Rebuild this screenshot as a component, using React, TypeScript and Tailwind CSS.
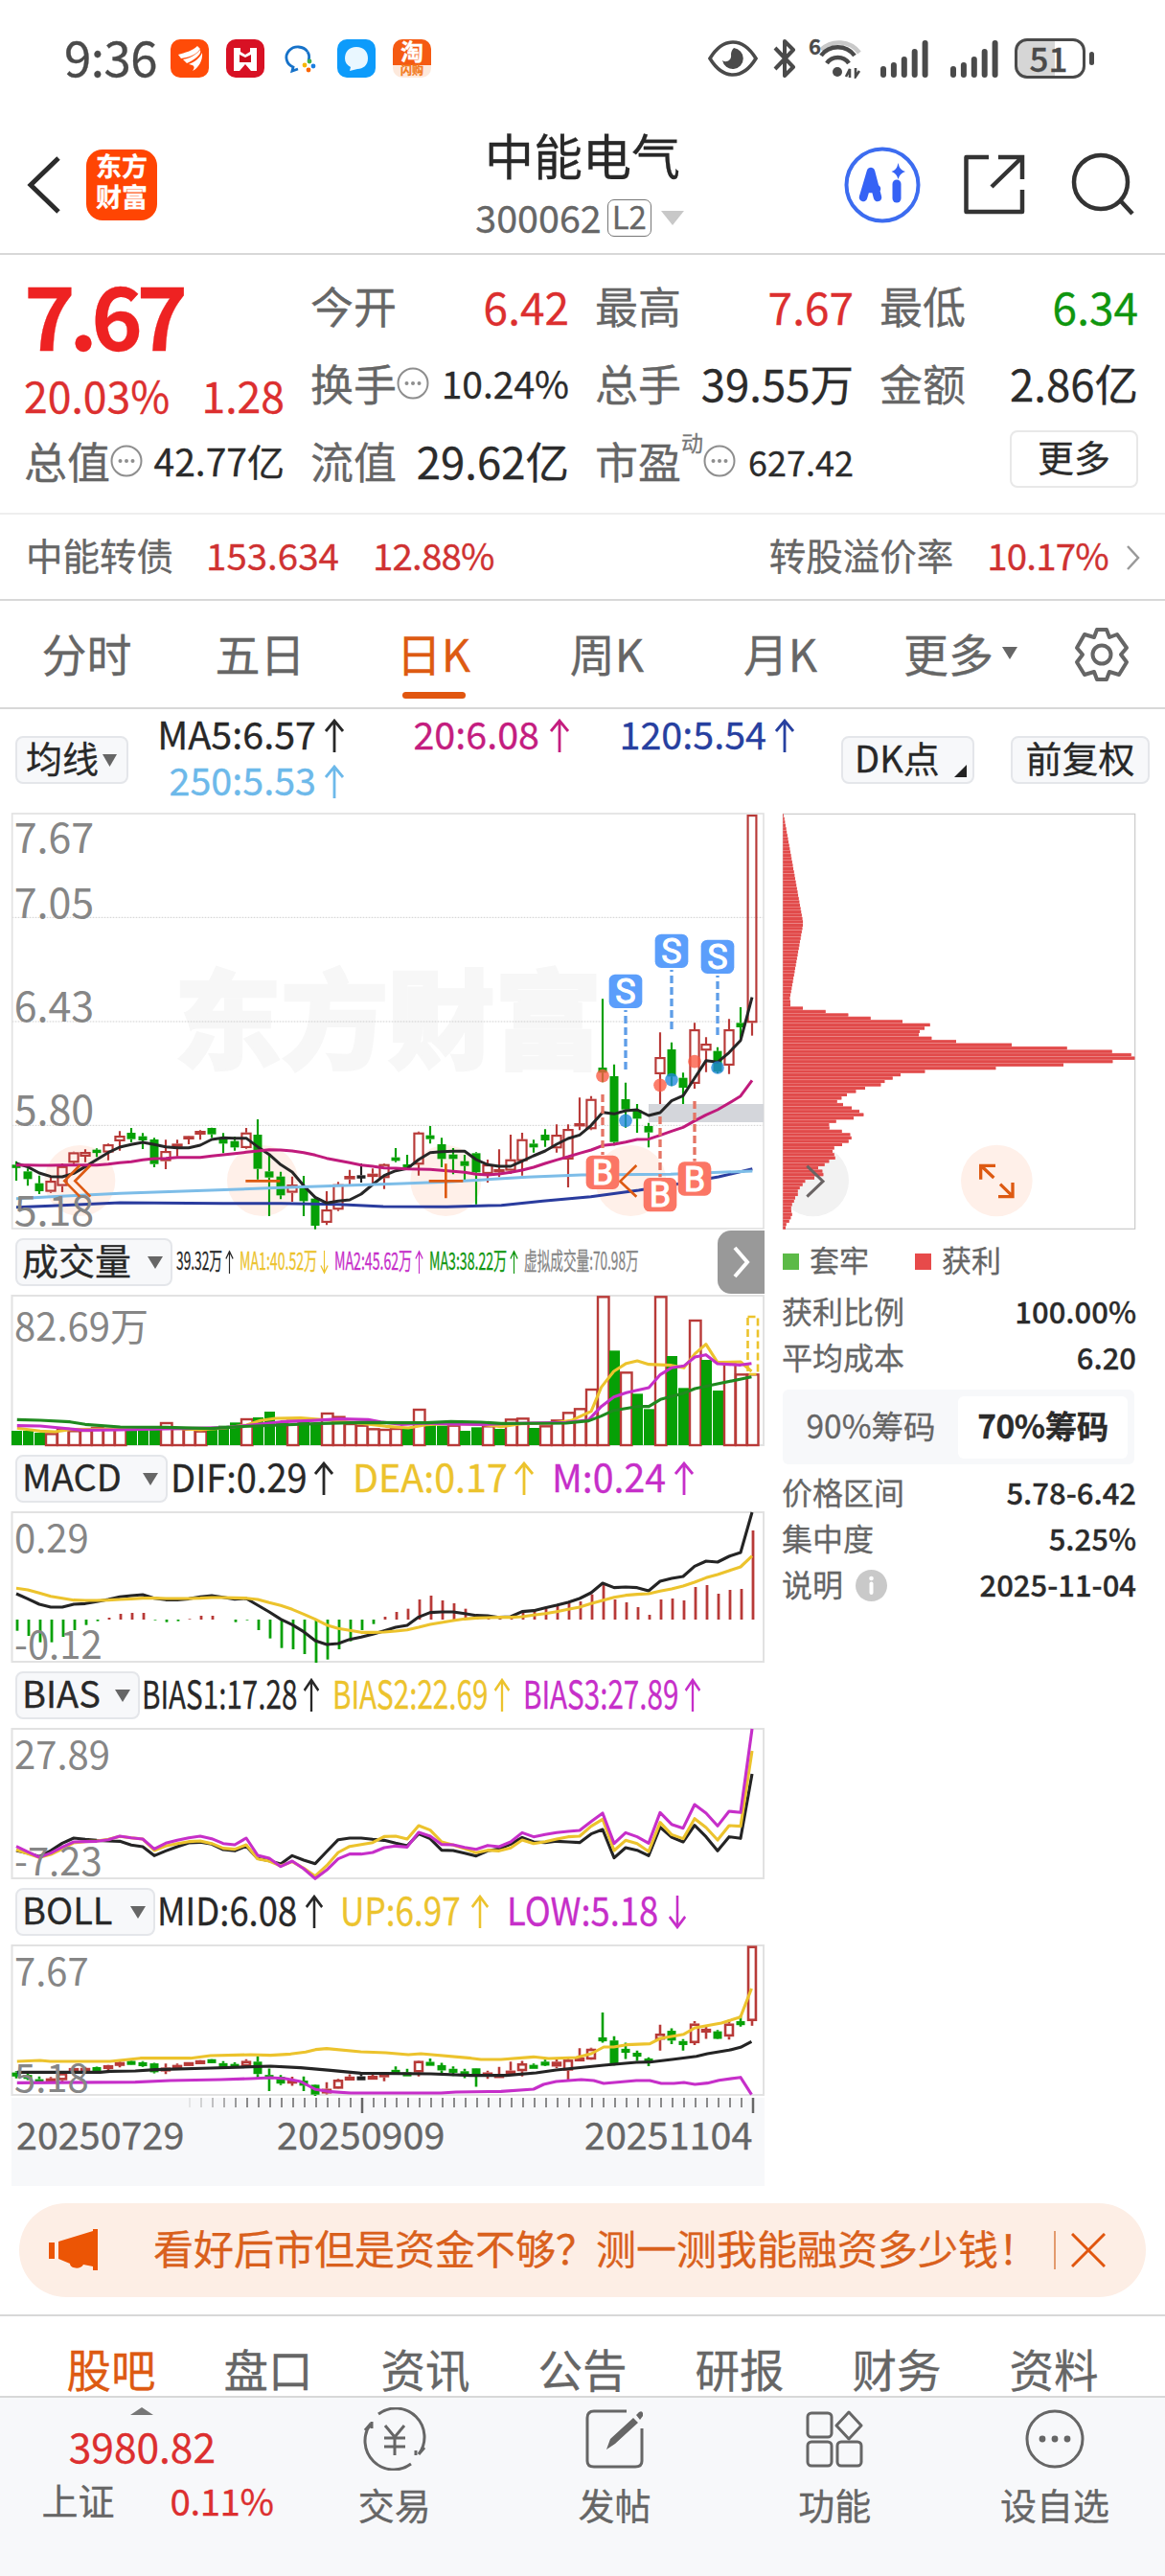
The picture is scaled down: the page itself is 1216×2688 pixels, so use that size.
import { type ReactNode } from 'react'

type Candle = [color: 'r' | 'g' | 'k', high: number, top: number, bottom: number, low: number]

const RED = '#b83a38'
const GREEN = '#06a006'
const YELLOW = '#ecc32d'
const PURPLE = '#c62fc9'
const DARK = '#242424'

// All series are stored in chart units: three units make one pixel.
const candles: Candle[] = [
  ['g', 1115, 1126, 1134, 1176], ['g', 1138, 1147, 1171, 1192], ['g', 1160, 1184, 1209, 1218],
  ['r', 1165, 1176, 1211, 1214], ['r', 1122, 1130, 1193, 1212], ['r', 1085, 1087, 1120, 1130],
  ['r', 1078, 1086, 1101, 1118], ['g', 1075, 1079, 1083, 1102], ['r', 1060, 1062, 1088, 1112],
  ['r', 1021, 1035, 1053, 1082], ['g', 1011, 1026, 1046, 1056], ['g', 1027, 1037, 1050, 1077],
  ['g', 1042, 1047, 1124, 1134], ['r', 1048, 1083, 1115, 1140], ['r', 1048, 1060, 1068, 1100],
  ['r', 1035, 1036, 1047, 1062], ['r', 1018, 1020, 1032, 1048], ['g', 1010, 1011, 1031, 1042],
  ['g', 1027, 1045, 1060, 1090], ['g', 1038, 1052, 1072, 1082], ['r', 1011, 1025, 1074, 1076],
  ['g', 984, 1032, 1139, 1172], ['g', 1092, 1147, 1166, 1287], ['g', 1148, 1163, 1222, 1234],
  ['r', 1163, 1188, 1214, 1242], ['g', 1161, 1196, 1240, 1287], ['g', 1228, 1232, 1317, 1328],
  ['r', 1209, 1266, 1308, 1315], ['r', 1180, 1187, 1267, 1271], ['r', 1142, 1161, 1172, 1190],
  ['k', 1122, 1159, 1164, 1182], ['r', 1138, 1154, 1159, 1185], ['r', 1122, 1124, 1168, 1202],
  ['g', 1074, 1103, 1114, 1118], ['g', 1095, 1125, 1130, 1140], ['r', 1022, 1025, 1126, 1160],
  ['g', 1005, 1034, 1046, 1060], ['g', 1042, 1062, 1108, 1134], ['g', 1074, 1094, 1108, 1156],
  ['g', 1095, 1115, 1130, 1175], ['g', 1087, 1090, 1150, 1250], ['r', 1110, 1125, 1155, 1182],
  ['r', 1078, 1140, 1150, 1165], ['r', 1032, 1109, 1145, 1155], ['r', 1026, 1046, 1115, 1160],
  ['g', 1048, 1060, 1072, 1088], ['g', 1015, 1032, 1050, 1070], ['r', 1000, 1032, 1075, 1088],
  ['r', 1000, 1014, 1110, 1197], ['r', 916, 996, 1006, 1018], ['r', 911, 920, 1015, 1018],
  ['g', 607, 822, 838, 868], ['g', 812, 849, 1055, 1066], ['g', 869, 921, 953, 1010],
  ['g', 936, 955, 982, 1026], ['g', 995, 1005, 1025, 1072], ['r', 712, 789, 843, 936],
  ['g', 743, 765, 850, 880], ['g', 838, 854, 885, 936], ['r', 682, 702, 873, 888],
  ['r', 727, 747, 769, 836], ['g', 758, 770, 835, 840], ['r', 670, 702, 816, 842],
  ['g', 633, 682, 696, 730], ['r', 30, 30, 682, 722],
]

const ma5 = [
  1122, 1133, 1152, 1163, 1164, 1153, 1132, 1110, 1088, 1071, 1063, 1056, 1063, 1070, 1073, 1073, 1065, 1047, 1042, 1043,
  1043, 1070, 1094, 1126, 1149, 1192, 1228, 1246, 1240, 1236, 1218, 1188, 1160, 1145, 1138, 1110, 1088, 1085, 1084, 1084,
  1110, 1126, 1131, 1131, 1115, 1098, 1083, 1062, 1044, 1033, 1003, 962, 967, 957, 954, 972, 963, 926, 910, 855,
  800, 805, 775, 737, 602,
]
const ma20 = [
  1127, 1127, 1128, 1128, 1127, 1127, 1127, 1127, 1124, 1120, 1117, 1111, 1107, 1106, 1103, 1103, 1103, 1099, 1095, 1091,
  1087, 1083, 1079, 1080, 1083, 1088, 1096, 1106, 1113, 1120, 1127, 1131, 1136, 1137, 1139, 1140, 1141, 1144, 1147, 1150,
  1156, 1158, 1155, 1150, 1143, 1134, 1122, 1111, 1101, 1090, 1080, 1066, 1062, 1055, 1047, 1046, 1034, 1021, 1009, 989,
  970, 954, 933, 911, 862,
]
const ma120 = '51,1259 160,1255 376,1245 700,1247 880,1247 1060,1250 1200,1257 1400,1258 1570,1253 1700,1240 1850,1226 2000,1206 2100,1190 2250,1164 2356,1139'
const ma250 = '51,1232 160,1226 376,1216 660,1206 880,1198 1260,1185 1400,1180 1650,1165 1820,1158 2100,1156 2356,1146'

const volumes =
  'g606 g606 g612 r616 r600 r607 r606 r597 r600 r600 g604 g604 g602 r582 r600 r602 r608 g598 g590 g580 r570 g564 g546 g577 r575 g574 g582 r552 r563 r585 r590 r601 r603 r600 g598 r540 g586 g590 r590 g606 g595 r592 g600 r571 r568 g597 r592 r574 r550 r538 r477 r187 g355 r424 g490 g538 r187 g372 g472 r261 g384 g480 r395 r430 r430'.split(' ')

const volMa1: number[][] = [[34, 598], [80, 607], [110, 609], [140, 602], [250, 600], [340, 597], [400, 603], [450, 597], [492, 588], [520, 574], [550, 567], [600, 566], [660, 573], [720, 583], [770, 592], [815, 597], [850, 587], [900, 583], [960, 586], [1000, 593], [1040, 584], [1100, 582], [1140, 574], [1180, 545], [1200, 470], [1225, 420], [1250, 395], [1272, 387], [1295, 398], [1340, 401], [1365, 409], [1387, 365], [1409, 335], [1432, 392], [1478, 390], [1500, 420]]
const volMa2: number[][] = [[34, 590], [80, 591], [120, 597], [165, 604], [240, 603], [330, 600], [450, 596], [500, 588], [560, 578], [620, 574], [680, 569], [735, 571], [760, 578], [800, 586], [850, 582], [900, 585], [960, 586], [1050, 582], [1130, 580], [1175, 572], [1200, 530], [1225, 500], [1250, 487], [1295, 471], [1318, 430], [1340, 409], [1365, 403], [1387, 375], [1409, 368], [1432, 396], [1478, 400], [1500, 395]]
const volMa3: number[][] = [[34, 571], [80, 573], [140, 578], [170, 586], [240, 594], [330, 595], [420, 599], [480, 593], [560, 588], [640, 583], [720, 580], [850, 581], [900, 577], [960, 579], [1000, 583], [1130, 582], [1175, 575], [1200, 560], [1225, 542], [1272, 530], [1295, 530], [1318, 508], [1365, 488], [1387, 474], [1432, 459], [1500, 437]]

const macdBars = [
  392, 408, 428, 428, 411, 390, 374, 362, 351, 339, 336, 336, 359, 365, 362, 355, 345, 345, 357, 365,
  359, 390, 416, 446, 450, 465, 492, 482, 450, 425, 390, 371, 348, 333, 323, 294, 282, 297, 306, 323,
  340, 345, 350, 350, 330, 330, 322, 312, 305, 300, 278, 243, 294, 303, 318, 342, 294, 291, 297, 255,
  249, 276, 264, 261, 78,
]
const dif = [
  276, 292, 309, 318, 318, 309, 307, 301, 294, 286, 282, 279, 290, 295, 295, 292, 286, 282, 287, 293,
  291, 312, 333, 356, 373, 395, 423, 435, 432, 419, 412, 403, 392, 381, 375, 349, 335, 333, 333, 338,
  344, 345, 350, 348, 332, 329, 320, 312, 303, 291, 273, 243, 257, 255, 257, 267, 237, 228, 222, 190,
  174, 177, 159, 147, 21,
]
const dea = [
  259, 264, 274, 284, 290, 296, 297, 297, 296, 294, 292, 290, 290, 291, 291, 291, 290, 288, 288, 289,
  290, 294, 304, 313, 325, 340, 356, 374, 385, 391, 397, 397, 396, 393, 389, 381, 372, 366, 360, 355,
  352, 351, 350, 350, 348, 343, 338, 332, 325, 318, 307, 297, 287, 281, 278, 276, 268, 261, 252, 240,
  226, 216, 204, 192, 158,
]

const bias1 = [
  390, 398, 409, 390, 367, 351, 355, 358, 360, 361, 373, 378, 406, 391, 378, 366, 364, 370, 387, 391,
  376, 415, 422, 432, 406, 420, 431, 393, 356, 351, 351, 355, 358, 367, 375, 338, 353, 389, 390, 398,
  407, 391, 385, 370, 349, 363, 365, 361, 363, 365, 338, 324, 413, 381, 389, 406, 317, 348, 363, 311,
  347, 391, 347, 352, 150,
]
const bias2 = [
  388, 400, 412, 402, 385, 366, 362, 360, 355, 346, 350, 354, 390, 376, 368, 362, 360, 368, 383, 386,
  372, 416, 423, 438, 425, 445, 470, 437, 396, 377, 371, 365, 346, 345, 354, 312, 326, 363, 373, 384,
  397, 389, 391, 382, 357, 368, 362, 354, 347, 345, 314, 292, 390, 358, 368, 393, 302, 340, 353, 290,
  318, 357, 312, 314, 78,
]
const bias3 = [
  377, 394, 411, 398, 379, 363, 362, 361, 356, 345, 350, 354, 385, 367, 358, 350, 345, 353, 368, 372,
  351, 405, 414, 440, 423, 447, 478, 451, 416, 401, 401, 396, 381, 376, 379, 333, 345, 371, 372, 380,
  386, 374, 378, 363, 334, 347, 340, 334, 330, 327, 299, 273, 368, 334, 347, 367, 271, 308, 320, 246,
  273, 313, 267, 271, 9,
]

const bollUp: number[][] = [[34, 390], [80, 387], [100, 390], [220, 390], [280, 380], [380, 380], [420, 372], [500, 369], [540, 371], [580, 367], [610, 361], [630, 353], [652, 350], [720, 360], [770, 363], [815, 369], [840, 366], [940, 380], [960, 384], [1000, 384], [1065, 376], [1095, 381], [1150, 378], [1180, 366], [1205, 345], [1225, 345], [1250, 338], [1297, 335], [1318, 318], [1365, 305], [1387, 285], [1440, 270], [1478, 251], [1500, 162]]
const bollMid: number[][] = [[34, 424], [200, 424], [220, 421], [270, 420], [310, 416], [420, 411], [540, 405], [600, 410], [660, 418], [720, 427], [860, 429], [940, 434], [1010, 434], [1070, 426], [1110, 417], [1205, 402], [1270, 393], [1297, 392], [1345, 383], [1390, 374], [1412, 366], [1455, 355], [1478, 346], [1500, 328]]
const bollLow: number[][] = [[34, 457], [270, 455], [340, 450], [440, 447], [500, 444], [540, 441], [570, 444], [600, 453], [630, 478], [660, 485], [700, 489], [880, 489], [910, 486], [1000, 484], [1065, 477], [1085, 462], [1110, 453], [1160, 447], [1185, 450], [1205, 459], [1270, 450], [1297, 450], [1320, 459], [1345, 459], [1365, 456], [1387, 462], [1412, 458], [1435, 449], [1478, 440], [1500, 494]]

const chipTail = [
  114, 185, 256, 326, 426, 512, 495, 480, 477, 517, 594, 768, 941, 1082, 1142, 1153, 1084, 930, 718, 496, 420, 395, 370,
  358, 309, 280, 252, 235, 221, 240, 267, 291, 304, 273, 218, 196, 197, 236, 262, 266, 257, 237, 212, 207, 212, 215,
  196, 182, 162, 175, 178, 150, 121, 113, 104, 98, 98, 90, 86, 80, 77, 78, 80, 76, 71, 62, 60,
]

const CHIP_STEP = 10.41
const chipBars = Array.from({ length: 125 }, (_, i) => {
  const y = 27 + i * CHIP_STEP
  if (i >= 58) return chipTail[i - 58] ?? 60
  if (y < 365) return 54 + ((y - 27) / 338) * 61
  if (y < 600) return 115 - ((y - 365) / 235) * 42
  return 75
})

// Pixel x of the i-th trading day
const dayX = (i: number) => 17 + 12 * i
const series = (values: number[]) => values.map((v, i) => `${dayX(i)},${v / 3}`).join(' ')
const points = (list: number[][]) => list.map(([x, y]) => `${x / 1.9122},${y / 3}`).join(' ')

function Triangle({ className = '' }: { className?: string }) {
  return (
    <svg className={`shrink-0 ${className}`} viewBox="0 0 10 10" preserveAspectRatio="none">
      <path d="M0 0H10L5 10Z" fill="currentColor" />
    </svg>
  )
}

function Arrow({ down, className = 'w-[22px]' }: { down?: boolean; className?: string }) {
  return (
    <svg className={`h-[36px] shrink-0 ${className} ${down ? 'rotate-180' : ''}`} viewBox="0 0 22 36" preserveAspectRatio="none">
      <path d="M11 35V2M2 13L11 2L20 13" fill="none" stroke="currentColor" strokeWidth="2.8" />
    </svg>
  )
}

function MoreDots() {
  return (
    <svg className="w-[34px] h-[34px] shrink-0 text-[#8e8e8e]" viewBox="0 0 34 34">
      <circle cx="17" cy="17" r="15.5" fill="none" stroke="currentColor" strokeWidth="2" />
      <circle cx="10.5" cy="17" r="2" fill="currentColor" />
      <circle cx="17" cy="17" r="2" fill="currentColor" />
      <circle cx="23.5" cy="17" r="2" fill="currentColor" />
    </svg>
  )
}

function SignalBars() {
  return (
    <svg className="w-[50px] h-[40px]" viewBox="0 0 50 40">
      {[12, 16, 22, 30, 39].map((h, i) => (
        <rect key={i} x={i * 10.9} y={40 - h} width="6" height={h} rx="3" fill="#4a4a4a" />
      ))}
    </svg>
  )
}

function StatusBar() {
  return (
    <div className="h-[122px] flex items-center pl-[67px] pr-[74px] text-[#4a4a4a]">
      <span className="w-[111px] text-[51px] tracking-[-0.5px] -mt-[5px]">9:36</span>
      <div className="flex items-center gap-[18px]">
        <svg className="w-[40px] h-[40px]" viewBox="0 0 40 40">
          <rect width="40" height="40" rx="10" fill="#ff4b08" />
          <path d="M8 16C15 14 23 12 28 7L31 10C26 17 18 19 11 20ZM13 21C20 20 27 16 31 11C33 16 24 22 17 25ZM19 26C25 24 31 19 33 14C34 22 29 30 23 33C26 29 25 27 19 26Z" fill="#fff" />
        </svg>
        <svg className="w-[40px] h-[40px]" viewBox="0 0 40 40">
          <rect width="40" height="40" rx="10" fill="#d81124" />
          <path d="M8 9L15 9V13L20 16L25 13V9L32 9V33H26L20 26L14 33H8Z" fill="#fff" />
          <path d="M14 16L20 19L26 16V24H14Z" fill="#c90a1d" />
        </svg>
        <svg className="w-[40px] h-[40px]" viewBox="0 0 40 40">
          <path d="M27 13A12 11 0 1 0 12 29L11 33L17 31" fill="none" stroke="#1672c9" strokeWidth="2.8" />
          <path d="M27 13A12 11 0 0 1 28 22" fill="none" stroke="#1672c9" strokeWidth="2.8" />
          <circle cx="29" cy="23" r="2.4" fill="#3fae49" />
          <circle cx="33" cy="28" r="2.4" fill="#1b7fe0" />
          <circle cx="28" cy="32" r="2.4" fill="#fb6500" />
          <circle cx="24" cy="27" r="2.4" fill="#f7b500" />
        </svg>
        <svg className="w-[40px] h-[40px]" viewBox="0 0 40 40">
          <rect width="40" height="40" rx="10" fill="#0d9bfb" />
          <path d="M20 8C28 8 32 13 32 20C32 27 27 31 21 31L13 33L14 29C10 27 8 24 8 20C8 13 12 8 20 8Z" fill="#e9f7ff" />
        </svg>
        <div className="w-[40px] h-[40px] rounded-[10px] bg-[#fde9dc] flex flex-col items-center">
          <div className="w-full h-[27px] rounded-t-[10px] bg-[#f55a12] text-white text-[24px] leading-[23px] font-bold text-center">淘</div>
          <div className="text-[12px] font-bold text-[#f27a1c] whitespace-nowrap -mt-[1px]">闪购</div>
        </div>
      </div>
      <div className="ml-auto flex items-center">
        <svg className="w-[52px] h-[38px]" viewBox="0 0 52 38">
          <path d="M2 19C10 6 18 2 26 2S42 6 50 19C42 32 34 36 26 36S10 32 2 19Z" fill="none" stroke="#4a4a4a" strokeWidth="3.6" />
          <path d="M27 8A11 11 0 1 1 15 21C19 24 25 21 24 15C24 12 25 10 27 8Z" fill="#4a4a4a" />
        </svg>
        <svg className="w-[24px] h-[40px] ml-[16px]" viewBox="0 0 24 40">
          <path d="M2 9L21 29L12 38V2L21 11L2 31" fill="none" stroke="#4a4a4a" strokeWidth="4" strokeLinejoin="round" />
        </svg>
        <div className="relative w-[56px] h-[42px] ml-[13px]">
          <span className="absolute left-0 -top-[4px] text-[22px] font-bold">6</span>
          <svg className="w-[56px] h-[42px]" viewBox="0 0 56 42" fill="none" strokeWidth="4.5">
            <path d="M13 12A27 27 0 0 1 53 15" stroke="#c9c9c9" />
            <path d="M13 18A22 22 0 0 1 48 18" stroke="#4a4a4a" />
            <path d="M19 26A14 14 0 0 1 42 26" stroke="#4a4a4a" />
            <circle cx="30" cy="35" r="5" fill="#4a4a4a" />
            <path d="M39 40L43 32V41M49 31V40L53 34" stroke="#4a4a4a" strokeWidth="2.6" />
          </svg>
        </div>
        <div className="ml-[19px] flex gap-[23px]">
          <SignalBars />
          <SignalBars />
        </div>
        <div className="ml-[17px] w-[74px] h-[42px] rounded-[13px] border-[3px] border-[#4a4a4a] bg-[linear-gradient(90deg,#d6d6d6_58%,#fff_58%)] flex items-center justify-center text-[35px] font-medium pb-[4px] pr-[3px]">
          51
        </div>
        <div className="ml-[4px] w-[5px] h-[14px] rounded bg-[#4a4a4a]" />
      </div>
    </div>
  )
}

function TitleBar() {
  return (
    <header className="h-[144px] border-b-2 border-[#d8d8d8] flex text-[#282828]">
      <div className="w-[400px] flex pt-[34px]">
        <svg className="w-[36px] h-[60px] ml-[28px] mt-[7px]" viewBox="0 0 36 60">
          <path d="M33 2L4 30L33 58" fill="none" stroke="#2b2b2b" strokeWidth="5" />
        </svg>
        <div className="ml-[26px] w-[74px] h-[74px] rounded-[17px] bg-[#ff4503] text-white font-bold text-[27px] leading-[32px] text-center pt-[1px]">
          东方
          <br />
          财富
        </div>
      </div>
      <div className="w-[416px] flex flex-col items-center">
        <h1 className="text-[51px] mt-[14px]">中能电气</h1>
        <div className="flex items-center mt-[21px] mr-[6px] text-[39.5px] text-[#666]">
          <span className="-mt-[4px]">300062</span>
          <span className="ml-[6px] w-[46px] h-[39px] border-[1.5px] border-[#777] rounded-[7px] text-[33px] text-center">L2</span>
          <Triangle className="ml-[10px] w-[24px] h-[15px] text-[#c8c8c8]" />
        </div>
      </div>
      <div className="flex-1 flex items-start">
        <svg className="w-[80px] h-[80px] ml-[65px] mt-[31px]" viewBox="0 0 80 80">
          <circle cx="40" cy="40" r="37.5" fill="none" stroke="#3c6cf0" strokeWidth="4" />
          <path d="M20 53L28 26L35 53M23 44H34" fill="none" stroke="#3562f5" strokeWidth="8.5" strokeLinejoin="round" strokeLinecap="round" />
          <path d="M55 39V54" stroke="#3562f5" strokeWidth="9" strokeLinecap="round" />
          <path d="M56.5 17Q58 25 64 26Q58 28 56.5 34Q55 28 49.5 26Q55 25 56.5 17Z" fill="#3562f5" />
        </svg>
        <svg className="w-[66px] h-[66px] ml-[44px] mt-[38px]" viewBox="0 0 66 66" fill="none" stroke="#333" strokeWidth="4.5">
          <path d="M27 4H3.5V61H62V38" strokeLinejoin="round" />
          <path d="M37 4H62V27M62 4L30 35" />
        </svg>
        <svg className="w-[68px] h-[68px] ml-[47px] mt-[37px]" viewBox="0 0 68 68" fill="none" stroke="#333" strokeWidth="4.5">
          <circle cx="31" cy="31" r="28" />
          <path d="M51 50L64 64" />
        </svg>
      </div>
    </header>
  )
}

function Quote({ label, value, size = 'text-[45px]', color = 'text-[#2b2b2b]', icon }: { label: string; value: string; size?: string; color?: string; icon?: ReactNode }) {
  return (
    <div className="h-[81px] flex items-center whitespace-nowrap">
      <span className="text-[45px] text-[#666]">{label}</span>
      {icon}
      <span className={`ml-auto ${size} ${color}`}>{value}</span>
    </div>
  )
}

function QuotePanel() {
  return (
    <section className="h-[271px] border-b-2 border-[#eee] pt-[12px] px-[25px] grid grid-cols-[272px_270px_270px_270px] gap-x-[27px]">
      <div className="flex flex-col">
        <div className="h-[107px] flex items-center text-[91px] font-bold tracking-[-6.5px] text-[#ee2222] pb-[10px]">7.67</div>
        <div className="h-[55px] flex items-center justify-between text-[44.5px] text-[#dc2f2f]">
          <span>20.03%</span>
          <span>1.28</span>
        </div>
        <Quote label="总值" value="42.77亿" size="text-[39px]" icon={<MoreDots />} />
      </div>
      <div>
        <Quote label="今开" value="6.42" size="text-[46px]" color="text-[#dc2f2f]" />
        <Quote label="换手" value="10.24%" size="text-[39px]" icon={<MoreDots />} />
        <Quote label="流值" value="29.62亿" size="text-[45.5px]" />
      </div>
      <div>
        <Quote label="最高" value="7.67" size="text-[46px]" color="text-[#dc2f2f]" />
        <Quote label="总手" value="39.55万" size="text-[45.5px]" />
        <Quote
          label="市盈"
          value="627.42"
          size="text-[36px]"
          icon={
            <span className="flex items-center">
              <span className="text-[23px] text-[#777] self-start -mt-[14px]">动</span>
              <MoreDots />
            </span>
          }
        />
      </div>
      <div>
        <Quote label="最低" value="6.34" size="text-[46px]" color="text-[#0f960f]" />
        <Quote label="金额" value="2.86亿" size="text-[45.5px]" />
        <div className="h-[77px] flex items-center justify-end">
          <button className="w-[134px] h-[60px] border-2 border-[#e8e8e8] rounded-[8px] text-[38px] text-[#2b2b2b] pb-[5px]">更多</button>
        </div>
      </div>
    </section>
  )
}

function BondRow() {
  return (
    <div className="h-[90px] border-b-2 border-[#d8d8d8] flex items-center pl-[27px] pr-[26px] pb-[6px] text-[38.5px] text-[#666] whitespace-nowrap">
      <span>中能转债</span>
      <span className="ml-[34px] text-[#cf3232]">153.634</span>
      <span className="ml-[35px] text-[#cf3232] tracking-[-0.8px]">12.88%</span>
      <span className="ml-auto">转股溢价率</span>
      <span className="ml-[35px] text-[#cf3232] tracking-[-0.8px]">10.17%</span>
      <svg className="w-[14px] h-[28px] ml-[19px] mt-[8px]" viewBox="0 0 14 28">
        <path d="M1 2L12 14L1 26" fill="none" stroke="#999" strokeWidth="2.5" />
      </svg>
    </div>
  )
}

function PeriodTabs() {
  const tabs = ['分时', '五日', '日K', '周K', '月K', '更多']
  return (
    <nav className="h-[113px] border-b-2 border-[#d8d8d8] grid grid-cols-[181px_181px_181px_181px_181px_181px_128px] text-[47px] text-[#666]">
      {tabs.map((tab) => (
        <div key={tab} className={`flex flex-col items-center ${tab === '日K' ? 'text-[#dd5a12]' : ''}`}>
          <span className="mt-[30px] flex items-center whitespace-nowrap">
            {tab}
            {tab === '更多' && <Triangle className="ml-[9px] -mr-[14px] mt-[2px] w-[16px] h-[13px]" />}
          </span>
          {tab === '日K' && <span className="mt-[18px] w-[66px] h-[7px] rounded bg-[#e1560f]" />}
        </div>
      ))}
      <div className="flex justify-center pt-[27px]">
        <svg className="w-[58px] h-[58px]" viewBox="0 0 58 58" fill="none" stroke="#666" strokeWidth="4" strokeLinejoin="round">
          <path d="M24 3H34L37 11L45 8L55 22L49 29L55 37L47 50L37 47L34 55H24L21 47L11 50L3 37L9 29L3 22L11 8L21 11Z" />
          <circle cx="29" cy="29" r="9.5" />
        </svg>
      </div>
    </nav>
  )
}

function Chip({ children, className = '' }: { children: ReactNode; className?: string }) {
  return (
    <div className={`h-[50px] shrink-0 flex items-center whitespace-nowrap rounded-[8px] border-2 border-[#e4e6ea] bg-[#f7f8fa] text-[38px] text-[#282828] ${className}`}>
      {children}
    </div>
  )
}

function AverageRow() {
  return (
    <div className="h-[108px] flex pl-[16px] pr-[16px]">
      <Chip className="mt-[28px] w-[118px] pl-[9px]">
        <span className="-mt-[6px]">均线</span>
        <Triangle className="ml-[4px] w-[15px] h-[13px] text-[#666]" />
      </Chip>
      <div className="w-[696px] grid grid-cols-[226px_235px_235px] content-start pt-[10px] gap-y-[12px] text-[39.5px]">
        <span className="flex items-center justify-end text-[#282828]"><span className="mr-[8px] -mt-[6px]">MA5:6.57</span><Arrow /></span>
        <span className="flex items-center justify-end text-[#c41d7f]"><span className="mr-[10px] -mt-[6px]">20:6.08</span><Arrow /></span>
        <span className="flex items-center justify-end text-[#2740a0]"><span className="mr-[8px] -mt-[6px]">120:5.54</span><Arrow /></span>
        <span className="flex items-center justify-end text-[#6db9ea]"><span className="mr-[8px] -mt-[6px]">250:5.53</span><Arrow /></span>
      </div>
      <Chip className="mt-[28px] ml-auto w-[139px] pl-[12px]">
        <span className="-mt-[6px]">DK点</span>
        <svg className="w-[13px] h-[13px] ml-auto mr-[6px] mt-[22px]" viewBox="0 0 13 13"><path d="M13 0V13H0Z" fill="#222" /></svg>
      </Chip>
      <Chip className="mt-[28px] ml-[38px] w-[145px] justify-center">
        <span className="-mt-[6px]">前复权</span>
      </Chip>
    </div>
  )
}

function CandleStick({ data, x, scale, bodyWidth, pen }: { data: Candle; x: number; scale: (v: number) => number; bodyWidth: number; pen: number }) {
  const [kind, ...levels] = data
  const [high, top, bottom, low] = levels.map(scale)
  const color = kind === 'r' ? RED : kind === 'g' ? GREEN : '#222'
  const height = Math.max(bottom - top, pen * 1.6)
  const hollow = kind === 'r' && height > pen * 2
  return (
    <g stroke={color} strokeWidth={pen}>
      <path d={`M${x} ${high}V${top}M${x} ${bottom}V${low}`} />
      {hollow ? (
        <rect x={x - bodyWidth / 2 + pen / 2} y={top + pen / 2} width={bodyWidth - pen} height={height - pen} fill="none" />
      ) : (
        <rect x={x - bodyWidth / 2} y={top} width={bodyWidth} height={height} fill={color} stroke="none" />
      )}
    </g>
  )
}

function Signal({ x, y, letter, line, dot }: { x: number; y: number; letter: 'S' | 'B'; line: [number, number]; dot: number }) {
  const color = letter === 'S' ? '#5b9efb' : '#fb7665'
  return (
    <g>
      <path d={`M${x} ${line[0]}V${line[1]}`} stroke={letter === 'S' ? '#5f9ee8' : '#e57565'} strokeWidth="10" strokeDasharray="24 12" strokeDashoffset={letter === 'S' ? 18 : 0} />
      <circle cx={x} cy={dot} r="20.5" fill={letter === 'S' ? '#1f86dd' : '#fb5a42'} opacity="0.78" />
      <rect x={x - 52} y={y - 53} width="104" height="106" rx="20" fill={color} />
      <text x={x} y={y + 38} fontSize="108" textAnchor="middle" fill="#fff" stroke="#fff" strokeWidth="3" fontFamily="Roboto, sans-serif">{letter}</text>
    </g>
  )
}

function PriceChart() {
  const line = (values: number[]) => values.map((v, i) => `${51 + 36 * i},${v}`).join(' ')
  return (
    <svg className="block w-[786px] h-[435px] overflow-visible" viewBox="36 24 2358 1305">
      <text x="545" y="800" fontSize="336" fontWeight="900" fill="#f7f7f7" stroke="#f7f7f7" strokeWidth="8" textLength="1340">东方财富</text>
      {[352, 678, 1003].map((y) => (
        <path key={y} d={`M38 ${y}H2390`} stroke="#cfcfcf" strokeWidth="3" strokeDasharray="5 4" />
      ))}
      <rect x="38" y="27" width="2353" height="1299" fill="none" stroke="#e2e2e2" strokeWidth="5" />
      {[250, 822, 1396, 1975].map((x) => (
        <circle key={x} cx={x} cy="1176" r="111" fill="#fff0e9" />
      ))}
      <rect x="2031" y="936" width="360" height="57" fill="#d4d6db" />
      {candles.map((c, i) => (
        <CandleStick key={i} data={c} x={51 + 36 * i} scale={(v) => v} bodyWidth={i === 64 ? 33 : c[0] === 'r' ? 34 : 27} pen={6.5} />
      ))}
      <g fill="none" strokeWidth="9" strokeLinejoin="round">
        <polyline points={ma120} stroke="#2a3c9e" />
        <polyline points={line(ma5)} stroke="#262626" />
        <polyline points={line(ma20)} stroke="#c01b7c" />
        <polyline points={ma250} stroke="#7dbde8" />
      </g>
      <g fontSize="129" fill="#868686">
        <text x="44" y="151">7.67</text>
        <text x="44" y="353">7.05</text>
        <text x="44" y="677">6.43</text>
        <text x="44" y="1003">5.80</text>
        <text x="44" y="1316">5.18</text>
      </g>
      <g fill="none" stroke="#dd5a12" strokeWidth="8">
        <path d="M250 1128L202 1177L250 1226M283 1128L235 1177L283 1226" />
        <path d="M769 1177H877M1343 1177H1450M1396 1123V1231M1993 1128L1942 1178L1993 1226" />
      </g>
      <Signal x={1959} y={583} letter="S" line={[642, 828]} dot={988} />
      <Signal x={2103} y={457} letter="S" line={[516, 703]} dot={860} />
      <Signal x={2247} y={475} letter="S" line={[534, 721]} dot={822} />
      <Signal x={1887} y={1150} letter="B" line={[906, 1095]} dot={848} />
      <Signal x={2067} y={1220} letter="B" line={[975, 1165]} dot={877} />
      <Signal x={2175} y={1170} letter="B" line={[927, 1115]} dot={803} />
    </svg>
  )
}

function ChipChart() {
  return (
    <svg className="block w-[370px] h-[435px]" viewBox="48 24 1110 1305">
      <rect x="52" y="28" width="1102" height="1299" fill="none" stroke="#c9c9c9" strokeWidth="3.5" />
      <circle cx="146" cy="1176" r="112" fill="#f2f2f2" />
      {chipBars.map((end, i) => (
        <g key={i}>
          <rect x="52" y={27 + i * CHIP_STEP} width={end - 52} height={CHIP_STEP} fill="#ec8080" />
          <rect x="52" y={28.5 + i * CHIP_STEP} width={end - 52} height="8.8" fill="#e14a4a" />
        </g>
      ))}
      <path d="M127 1130L177 1178L127 1226" fill="none" stroke="#6a6464" strokeWidth="9" />
      <circle cx="721" cy="1176" r="112" fill="#fff0e9" />
      <path d="M671 1172V1129H717M673 1130L712 1167M732 1187L771 1225M726 1226H771V1182" fill="none" stroke="#dd5a12" strokeWidth="10" />
    </svg>
  )
}

function SubChart({ top, children, labels }: { top: number; children: ReactNode; labels: [string, number][] }) {
  return (
    <svg className="block w-[786px] h-[158px] overflow-visible" viewBox={`12 ${top} 786 158`}>
      <rect x="12.5" y={top + 1} width="784.5" height="156" fill="none" stroke="#e2e2e2" strokeWidth="2" />
      {children}
      {labels.map(([text, y]) => (
        <text key={text} x="15" y={y / 3} fontSize="40" fill="#868686">{text}</text>
      ))}
    </svg>
  )
}

function VolumeChart() {
  return (
    <SubChart top={60} labels={[['82.69万', 324]]}>
      {volumes.map((v, i) => {
        const up = v[0] === 'r'
        const y = Number(v.slice(1)) / 3
        return up ? (
          <rect key={i} x={dayX(i) - 5} y={y} width="11.5" height={217 - y} fill="#fff" stroke={RED} strokeWidth="2.4" />
        ) : (
          <rect key={i} x={dayX(i) - 5} y={y} width="11" height={217 - y} fill={GREEN} />
        )
      })}
      <rect x="780.5" y="83" width="10.5" height="60" fill="none" stroke={YELLOW} strokeWidth="2.6" strokeDasharray="8 4" />
      <g fill="none" strokeWidth="3.1" strokeLinejoin="round">
        <polyline points={points(volMa1)} stroke={YELLOW} />
        <polyline points={points(volMa2)} stroke={PURPLE} />
        <polyline points={points(volMa3)} stroke="#1f8a1f" />
      </g>
    </SubChart>
  )
}

function MacdChart() {
  return (
    <SubChart top={6} labels={[['0.29', 147], ['-0.12', 480]]}>
      {macdBars.map((v, i) => (
        <path key={i} d={`M${dayX(i) + 1} 119V${v / 3}`} stroke={v < 357 ? RED : GREEN} strokeWidth="2.8" />
      ))}
      <g fill="none" strokeWidth="3.1" strokeLinejoin="round">
        <polyline points={series(dif)} stroke={DARK} />
        <polyline points={series(dea)} stroke={YELLOW} />
      </g>
    </SubChart>
  )
}

function BiasChart() {
  return (
    <SubChart top={2} labels={[['27.89', 135], ['-7.23', 468]]}>
      <g fill="none" strokeWidth="3.1" strokeLinejoin="round">
        <polyline points={series(bias1)} stroke={DARK} />
        <polyline points={series(bias2)} stroke={YELLOW} />
        <polyline points={series(bias3)} stroke={PURPLE} />
      </g>
    </SubChart>
  )
}

function BollChart() {
  return (
    <SubChart top={8} labels={[['7.67', 153], ['5.18', 486]]}>
      {candles.map((c, i) => (
        <CandleStick key={i} data={c} x={dayX(i)} scale={(v) => (27 + (v - 27) * 0.362) / 3} bodyWidth={c[0] === 'r' ? 10.5 : 9} pen={2.6} />
      ))}
      <g fill="none" strokeWidth="3.1" strokeLinejoin="round">
        <polyline points={points(bollUp)} stroke={YELLOW} />
        <polyline points={points(bollMid)} stroke={DARK} />
        <polyline points={points(bollLow)} stroke={PURPLE} />
      </g>
    </SubChart>
  )
}

function TimeAxis() {
  return (
    <div className="mt-[2px] h-[92px] w-[786px] bg-[#f7f8fa]">
      <svg className="block w-[786px] h-[17px]" viewBox="12 0 786 17">
        {Array.from({ length: 50 }, (_, k) => k + 15).map((i) => (
          <path
            key={i}
            d={`M${dayX(i) + 1} 0V${i === 30 || i === 64 ? 16 : 10}`}
            stroke="#666"
            strokeWidth={i === 30 || i === 64 ? 2.5 : 1.5}
            opacity={Math.min(1, (i - 14) / 6)}
          />
        ))}
      </svg>
      <div className="flex pl-[5px] text-[39.5px] text-[#666]">
        <span className="w-[272px]">20250729</span>
        <span className="w-[321px]">20250909</span>
        <span>20251104</span>
      </div>
    </div>
  )
}

function IndicatorHeader({ name, width, children }: { name: string; width: string; children: ReactNode }) {
  return (
    <div className="h-[68px] flex items-center pl-[4px] w-[786px]">
      <Chip className={`${width} justify-between pl-[5px] pr-[8px]`}>
        <span className="-mt-[6px]">{name}</span>
        <Triangle className="text-[#666] w-[16px] h-[13px]" />
      </Chip>
      {children}
    </div>
  )
}

// Legend entry: text squeezed horizontally into a fixed slot, then a trend arrow
function Legend({ text, slot, squeeze, color, down, arrow = 'w-[22px]' }: { text: string; slot: string; squeeze: string; color: string; down?: boolean; arrow?: string }) {
  return (
    <span className={`flex items-center shrink-0 whitespace-nowrap ${color}`}>
      <span className={`${slot} -mt-[6px]`}>
        <span className={`inline-block origin-left ${squeeze}`}>{text}</span>
      </span>
      <Arrow down={down} className={arrow} />
    </span>
  )
}

function ChartColumn() {
  return (
    <div className="w-[798px] pl-[12px]">
      <PriceChart />
      <div className="flex relative">
        <IndicatorHeader name="成交量" width="w-[164px]">
          <div className="flex items-center text-[25px] ml-[4px]">
            <Legend text="39.32万" slot="w-[51px]" squeeze="scale-x-[0.55]" color="text-[#282828]" arrow="w-[9px] scale-y-[0.7]" />
            <Legend text="MA1:40.52万" slot="w-[84px] ml-[6px]" squeeze="scale-x-[0.565]" color="text-[#ecc32d]" arrow="w-[9px] scale-y-[0.7]" down />
            <Legend text="MA2:45.62万" slot="w-[84px] ml-[6px]" squeeze="scale-x-[0.565]" color="text-[#c62fc9]" arrow="w-[9px] scale-y-[0.7]" />
            <Legend text="MA3:38.22万" slot="w-[84px] ml-[6px]" squeeze="scale-x-[0.565]" color="text-[#0f960f]" arrow="w-[9px] scale-y-[0.7]" />
            <span className="w-[120px] ml-[6px] -mt-[6px] whitespace-nowrap text-[#868686]">
              <span className="inline-block origin-left scale-x-[0.545]">虚拟成交量:70.98万</span>
            </span>
          </div>
        </IndicatorHeader>
        <button className="absolute right-0 top-[1px] w-[49px] h-[66px] rounded-l-[14px] bg-[#999] flex items-center justify-center">
          <svg className="w-[18px] h-[34px]" viewBox="0 0 18 34">
            <path d="M2 2L15 17L2 32" fill="none" stroke="#fff" strokeWidth="4" />
          </svg>
        </button>
      </div>
      <VolumeChart />
      <IndicatorHeader name="MACD" width="w-[159px]">
        <div className="flex items-center text-[40px] ml-[3px]">
          <Legend text="DIF:0.29" slot="w-[149px]" squeeze="scale-x-[0.95]" color="text-[#282828]" />
          <Legend text="DEA:0.17" slot="w-[168px] ml-[19px]" squeeze="scale-x-[0.985]" color="text-[#ecc32d]" />
          <Legend text="M:0.24" slot="w-[127px] ml-[18px]" squeeze="scale-x-[0.98]" color="text-[#c62fc9]" />
        </div>
      </IndicatorHeader>
      <MacdChart />
      <IndicatorHeader name="BIAS" width="w-[130px]">
        <div className="flex items-center text-[40px] ml-[2px]">
          <Legend text="BIAS1:17.28" slot="w-[168px]" squeeze="scale-x-[0.74]" color="text-[#282828]" arrow="w-[18px]" />
          <Legend text="BIAS2:22.69" slot="w-[168px] ml-[13px]" squeeze="scale-x-[0.74]" color="text-[#ecc32d]" arrow="w-[18px]" />
          <Legend text="BIAS3:27.89" slot="w-[168px] ml-[13px]" squeeze="scale-x-[0.74]" color="text-[#c62fc9]" arrow="w-[18px]" />
        </div>
      </IndicatorHeader>
      <BiasChart />
      <IndicatorHeader name="BOLL" width="w-[146px]">
        <div className="flex items-center text-[40px] ml-[2px]">
          <Legend text="MID:6.08" slot="w-[154px]" squeeze="scale-x-[0.91]" color="text-[#282828]" arrow="w-[20px]" />
          <Legend text="UP:6.97" slot="w-[136px] ml-[17px]" squeeze="scale-x-[0.88]" color="text-[#ecc32d]" arrow="w-[20px]" />
          <Legend text="LOW:5.18" slot="w-[168px] ml-[18px]" squeeze="scale-x-[0.91]" color="text-[#c62fc9]" arrow="w-[20px]" down />
        </div>
      </IndicatorHeader>
      <BollChart />
      <TimeAxis />
    </div>
  )
}

function StatRow({ label, value, className = '' }: { label: ReactNode; value: string; className?: string }) {
  return (
    <div className={`h-[48px] flex items-center justify-between text-[32px] ${className}`}>
      <span className="flex items-center text-[#666]">{label}</span>
      <span className="font-medium text-[31px] text-[#2b2b2b]">{value}</span>
    </div>
  )
}

function ChipColumn() {
  return (
    <div className="ml-[18px] w-[370px]">
      <ChipChart />
      <div className="flex items-center h-[60px] text-[31px] text-[#666] pl-px">
        <span className="w-[17px] h-[17px] mt-[6px] bg-[#5cba47]" />
        <span className="ml-[11px]">套牢</span>
        <span className="ml-[48px] w-[17px] h-[17px] mt-[6px] bg-[#e74a4a]" />
        <span className="ml-[11px]">获利</span>
      </div>
      <StatRow label="获利比例" value="100.00%" />
      <StatRow label="平均成本" value="6.20" />
      <div className="mt-[11px] ml-px h-[78px] w-[367px] rounded-[6px] bg-[#f7f8fa] flex items-center p-[7px] text-[33.5px] text-[#666]">
        <span className="w-[170px] text-center pb-[4px]">90%筹码</span>
        <span className="ml-[6px] w-[177px] h-[65px] rounded-[6px] bg-white flex items-center justify-center font-bold text-[#2b2b2b] pb-[4px] tracking-[-0.5px]">70%筹码</span>
      </div>
      <StatRow label="价格区间" value="5.78-6.42" className="mt-[4px]" />
      <StatRow label="集中度" value="5.25%" />
      <StatRow
        label={
          <>
            说明
            <svg className="w-[33px] h-[33px] ml-[13px] mt-[4px]" viewBox="0 0 33 33">
              <circle cx="16.5" cy="16.5" r="16.5" fill="#c9c9c9" />
              <circle cx="16.5" cy="9" r="2.3" fill="#fff" />
              <path d="M16.5 14.5V24" stroke="#fff" strokeWidth="4" strokeLinecap="round" />
            </svg>
          </>
        }
        value="2025-11-04"
      />
    </div>
  )
}

function Banner() {
  return (
    <div className="mt-[18px] mx-[20px] h-[98px] rounded-full bg-[#fdeee5] flex items-center text-[#d9601c]">
      <svg className="w-[52px] h-[44px] ml-[31px]" viewBox="0 0 52 44">
        <path d="M0 14H6V31H0ZM10 13L46 2V0H51V43H46V39L36 37C33 43 22 41 22 36L10 31Z" fill="#ec5505" />
      </svg>
      <span className="ml-[57px] w-[936px] text-[42px] whitespace-nowrap pb-[6px]">看好后市但是资金不够？测一测我能融资多少钱！</span>
      <span className="ml-[4px] w-[2px] h-[40px] bg-[#e39a6e]" />
      <svg className="w-[36px] h-[36px] ml-[16px]" viewBox="0 0 36 36">
        <path d="M1 1L35 35M35 1L1 35" stroke="#e1560f" strokeWidth="3" />
      </svg>
    </div>
  )
}

function SectionTabs() {
  return (
    <nav className="mt-[18px] h-[87px] border-y-2 border-[#d8d8d8] flex pl-[34px] pt-[31px] text-[46.5px] text-[#666]">
      {['股吧', '盘口', '资讯', '公告', '研报', '财务', '资料'].map((tab, i) => (
        <span key={tab} className={`w-[164px] text-center whitespace-nowrap ${i === 0 ? 'text-[#dd5a12]' : ''}`}>{tab}</span>
      ))}
    </nav>
  )
}

function BottomBar() {
  const stroke = { fill: 'none', stroke: '#666', strokeWidth: 3 }
  const items = [
    {
      label: '交易',
      icon: (
        <svg className="w-[72px] h-[66px]" viewBox="0 0 72 66" {...stroke}>
          <path d="M19 7A30 30 0 0 1 61 49L67 42M58 45V50M53 59A30 30 0 0 1 11 17L5 24M12 22V15" />
          <path d="M26 19L36 31L46 19M36 31V50M25 32H47M25 41H47" />
        </svg>
      ),
    },
    {
      label: '发帖',
      icon: (
        <svg className="w-[64px] h-[66px]" viewBox="0 0 64 66" {...stroke}>
          <path d="M45 4H11Q4 4 4 11V56Q4 62 11 62H54Q61 62 61 56V22" />
          <path d="M24 44L28 33L52 11L57 16L33 38ZM55 8L58 5Q61 3 62 6L62 9L59 13Z" fill="#666" stroke="none" />
        </svg>
      ),
    },
    {
      label: '功能',
      icon: (
        <svg className="w-[62px] h-[62px]" viewBox="0 0 62 62" {...stroke}>
          <rect x="3" y="4" width="25" height="25" rx="4" />
          <rect x="3" y="34" width="25" height="25" rx="4" />
          <rect x="34" y="34" width="25" height="25" rx="4" />
          <path d="M46 3L59 17L46 31L33 17Z" strokeLinejoin="round" />
        </svg>
      ),
    },
    {
      label: '设自选',
      icon: (
        <svg className="w-[64px] h-[64px]" viewBox="0 0 64 64" {...stroke}>
          <circle cx="32" cy="32" r="29" />
          <g fill="#666" stroke="none">
            <circle cx="19" cy="32" r="3.4" />
            <circle cx="32" cy="32" r="3.4" />
            <circle cx="45" cy="32" r="3.4" />
          </g>
        </svg>
      ),
    },
  ]
  return (
    <footer className="h-[186px] bg-[#f7f8fa] flex text-[38px] text-[#666]">
      <div className="w-[297px] flex flex-col items-center">
        <Triangle className="w-[24px] h-[8px] mt-[10px] rotate-180 text-[#777]" />
        <span className="mt-[11px] text-[42.5px] text-[#dc2f2f]">3980.82</span>
        <div className="mt-[15px] w-[242px] ml-[32px] flex justify-between items-center">
          <span>上证</span>
          <span className="text-[#dc2f2f] text-[38.5px] tracking-[-0.5px]">0.11%</span>
        </div>
      </div>
      {items.map((item) => (
        <div key={item.label} className="w-[230px] flex flex-col items-center">
          <div className="mt-[10px] h-[66px] flex items-center">{item.icon}</div>
          <span className="mt-[16px]">{item.label}</span>
        </div>
      ))}
    </footer>
  )
}

export default function App() {
  return (
    <main className="w-[1216px] h-[2688px] overflow-hidden bg-white leading-none [-webkit-text-stroke:0.3px] [font-family:'Noto_Sans_CJK_SC',sans-serif]">
      <StatusBar />
      <TitleBar />
      <QuotePanel />
      <BondRow />
      <PeriodTabs />
      <AverageRow />
      <div className="flex h-[1433px]">
        <ChartColumn />
        <ChipColumn />
      </div>
      <Banner />
      <SectionTabs />
      <BottomBar />
    </main>
  )
}
